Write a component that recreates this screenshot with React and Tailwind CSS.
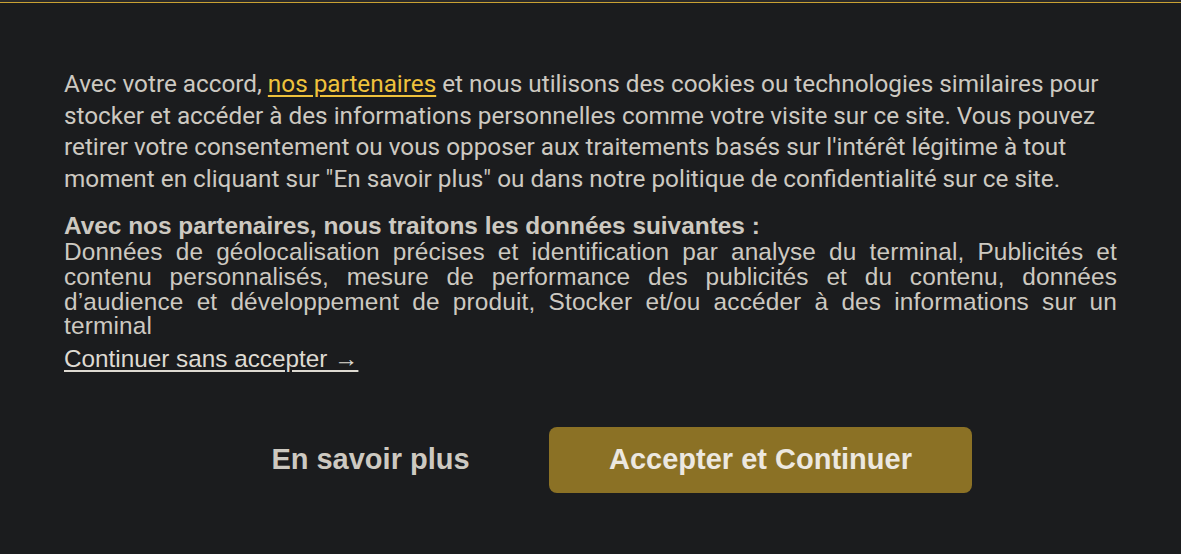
import React from 'react';

const roboto = { fontFamily: 'Roboto, "Liberation Sans", Arial, sans-serif' };
const arial = { fontFamily: '"Liberation Sans", Arial, sans-serif' };

const CookieBanner = () => {
  return (
    <div className="w-[1181px] h-[554px] bg-[#1b1c1e] overflow-hidden" style={arial}>
      {/* page behind the banner, mostly hidden */}
      <div className="h-[2px] overflow-hidden relative bg-[#2a2a2a]">
        <div className="absolute left-0 bottom-0 whitespace-nowrap text-[22px] leading-[22px] text-[#6b6b6b] font-bold">
          &nbsp;Actu&nbsp;&nbsp;&nbsp;&nbsp;Divertissement Mode&nbsp;&nbsp;&nbsp;Séries TV&nbsp;&nbsp;&nbsp;Culture Immobilier
        </div>
      </div>
      <div className="border-t border-[#c9a133] h-[552px] px-16 pt-[65px]">
        <p className="text-[24.3px] leading-[31.7px] text-[#cdc9c1]" style={roboto}>
          Avec votre accord,{' '}
          <a href="#" className="text-[#efc23c] underline underline-offset-[3px]">nos partenaires</a>{' '}
          et nous utilisons des cookies ou technologies similaires pour stocker et accéder à des informations
          personnelles comme votre visite sur ce site. Vous pouvez retirer votre consentement ou vous opposer aux
          traitements basés sur l'intérêt légitime à tout moment en cliquant sur "En savoir plus" ou dans notre
          politique de confidentialité sur ce site.
        </p>
        <div className="mt-[19px] text-[24.4px] leading-[24.6px] text-[#cdc9c1]">
          <div className="font-bold mb-[2px]">Avec nos partenaires, nous traitons les données suivantes :</div>
          <p className="text-justify tracking-[0.15px]">
            Données de géolocalisation précises et identification par analyse du terminal, Publicités et contenu
            personnalisés, mesure de performance des publicités et du contenu, données d’audience et développement
            de produit, Stocker et/ou accéder à des informations sur un terminal
          </p>
        </div>
        <a href="#" className="inline-block mt-[4px] text-[24.3px] leading-[32px] text-[#dedad2] underline underline-offset-[3px]">
          Continuer sans accepter →
        </a>
        <div className="flex justify-center items-center gap-[17px] mt-[52px]">
          <button className="w-[323px] h-[66px] text-[29px] font-bold text-[#cdc9c1]">
            En savoir plus
          </button>
          <button className="w-[423px] h-[66px] rounded-[8px] bg-[#8b7125] text-[29px] font-bold text-[#ece8e0]">
            Accepter et Continuer
          </button>
        </div>
      </div>
    </div>
  );
};

export default function App() {
  return <CookieBanner />;
}
